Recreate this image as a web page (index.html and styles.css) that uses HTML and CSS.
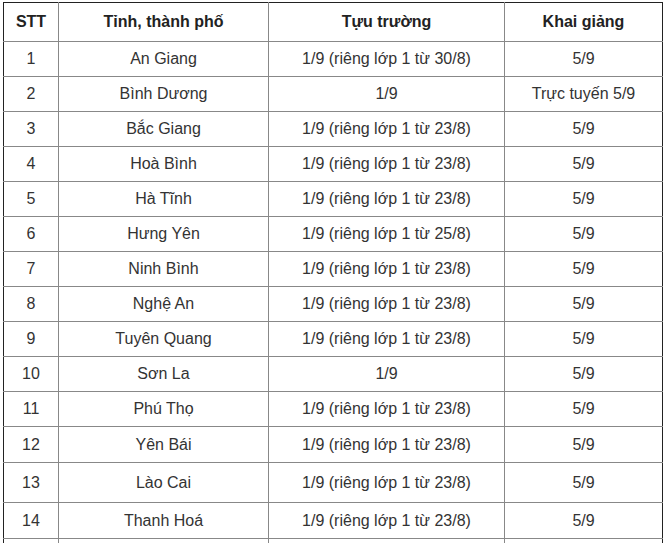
FILE: index.html
```html
<!DOCTYPE html>
<html lang="vi">
<head>
<meta charset="utf-8">
<title>Lịch tựu trường</title>
<link rel="stylesheet" href="styles.css">
</head>
<body>
<table class="schedule">
  <colgroup>
    <col class="c-stt">
    <col class="c-prov">
    <col class="c-start">
    <col class="c-open">
  </colgroup>
  <thead>
    <tr class="head"><th>STT</th><th>Tỉnh, thành phố</th><th>Tựu trường</th><th>Khai giảng</th></tr>
  </thead>
  <tbody>
    <tr><td>1</td><td>An Giang</td><td>1/9 (riêng lớp 1 từ 30/8)</td><td>5/9</td></tr>
    <tr><td>2</td><td>Bình Dương</td><td>1/9</td><td>Trực tuyến 5/9</td></tr>
    <tr><td>3</td><td>Bắc Giang</td><td>1/9 (riêng lớp 1 từ 23/8)</td><td>5/9</td></tr>
    <tr><td>4</td><td>Hoà Bình</td><td>1/9 (riêng lớp 1 từ 23/8)</td><td>5/9</td></tr>
    <tr><td>5</td><td>Hà Tĩnh</td><td>1/9 (riêng lớp 1 từ 23/8)</td><td>5/9</td></tr>
    <tr><td>6</td><td>Hưng Yên</td><td>1/9 (riêng lớp 1 từ 25/8)</td><td>5/9</td></tr>
    <tr><td>7</td><td>Ninh Bình</td><td>1/9 (riêng lớp 1 từ 23/8)</td><td>5/9</td></tr>
    <tr><td>8</td><td>Nghệ An</td><td>1/9 (riêng lớp 1 từ 23/8)</td><td>5/9</td></tr>
    <tr><td>9</td><td>Tuyên Quang</td><td>1/9 (riêng lớp 1 từ 23/8)</td><td>5/9</td></tr>
    <tr><td>10</td><td>Sơn La</td><td>1/9</td><td>5/9</td></tr>
    <tr><td>11</td><td>Phú Thọ</td><td>1/9 (riêng lớp 1 từ 23/8)</td><td>5/9</td></tr>
    <tr class="r36"><td>12</td><td>Yên Bái</td><td>1/9 (riêng lớp 1 từ 23/8)</td><td>5/9</td></tr>
    <tr class="r40"><td>13</td><td>Lào Cai</td><td>1/9 (riêng lớp 1 từ 23/8)</td><td>5/9</td></tr>
    <tr class="r36"><td>14</td><td>Thanh Hoá</td><td>1/9 (riêng lớp 1 từ 23/8)</td><td>5/9</td></tr>
    <tr><td></td><td></td><td></td><td></td></tr>
  </tbody>
</table>
</body>
</html>
```

FILE: styles.css
```css
html, body {
  margin: 0;
  padding: 0;
  background: #ffffff;
}

body {
  padding: 2px 0 0 3px;
  font-family: "Liberation Sans", Arial, sans-serif;
  font-size: 16px;
  color: #333333;
}

.schedule {
  border-collapse: collapse;
  table-layout: fixed;
  width: 660px;
}

.c-stt { width: 55px; }
.c-prov { width: 210px; }
.c-start { width: 236px; }
.c-open { width: 158px; }

.schedule th,
.schedule td {
  border: 1px solid #888888;
  padding: 0 4px;
  text-align: center;
  vertical-align: middle;
  line-height: 18px;
  white-space: nowrap;
}

.schedule th {
  font-weight: bold;
  color: #222222;
}

.schedule th:first-child,
.schedule td:first-child {
  border-left-color: #222222;
}

.schedule th:last-child,
.schedule td:last-child {
  border-right-color: #222222;
}

.schedule thead th {
  border-top-color: #222222;
}

.schedule .head { height: 39px; }
.schedule tbody tr { height: 35px; }
.schedule tbody tr.r36 { height: 36px; }
.schedule tbody tr.r40 { height: 40px; }
```
